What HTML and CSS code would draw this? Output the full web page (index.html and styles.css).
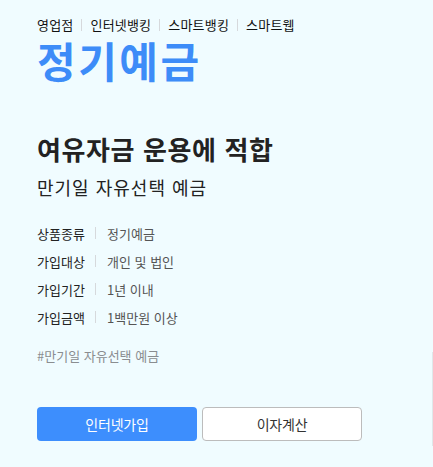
FILE: index.html
```html
<!DOCTYPE html>
<html lang="ko">
<head>
<meta charset="utf-8">
<title>정기예금</title>
<link rel="stylesheet" href="styles.css">
</head>
<body>
<div class="page">
  <nav class="channels">
    <span>영업점</span><i class="sep"></i><span>인터넷뱅킹</span><i class="sep"></i><span>스마트뱅킹</span><i class="sep"></i><span>스마트웹</span>
  </nav>
  <h1 class="title">정기예금</h1>
  <h2 class="headline">여유자금 운용에 적합</h2>
  <p class="subline">만기일 자유선택 예금</p>
  <dl class="info">
    <div class="row"><dt>상품종류</dt><dd>정기예금</dd></div>
    <div class="row"><dt>가입대상</dt><dd>개인 및 법인</dd></div>
    <div class="row"><dt>가입기간</dt><dd>1년 이내</dd></div>
    <div class="row"><dt>가입금액</dt><dd>1백만원 이상</dd></div>
  </dl>
  <p class="tag">#만기일 자유선택 예금</p>
  <div class="buttons">
    <a class="btn primary">인터넷가입</a>
    <a class="btn secondary">이자계산</a>
  </div>
</div>
<div class="edge"></div>
</body>
</html>
```

FILE: styles.css
```css
html, body {
  margin: 0;
  padding: 0;
  background: #f0fcff;
}
body {
  font-family: "Noto Sans CJK KR", "Noto Sans", sans-serif;
  color: #222;
  width: 433px;
  height: 467px;
  overflow: hidden;
  position: relative;
}
.page {
  padding: 15px 37px 0;
}
.channels {
  display: flex;
  align-items: center;
  height: 20px;
  line-height: 20px;
  font-size: 13px;
  color: #111;
  letter-spacing: 0.2px;
}
.channels .sep {
  display: block;
  width: 1px;
  height: 12px;
  background: #d6d9dc;
  margin: 0 8px;
}
.title {
  margin: 0;
  height: 50px;
  line-height: 50px;
  font-size: 42px;
  font-weight: 700;
  color: #3d8cf8;
  letter-spacing: 2.5px;
}
.headline {
  margin: 48px 0 0;
  height: 32px;
  line-height: 32px;
  font-size: 26px;
  font-weight: 700;
  color: #222;
  letter-spacing: 0.6px;
}
.subline {
  margin: 9px 0 0;
  height: 26px;
  line-height: 26px;
  font-size: 18px;
  color: #222;
  letter-spacing: 1px;
}
.info {
  margin: 19px 0 0;
}
.info .row {
  display: flex;
  align-items: center;
  height: 28px;
  font-size: 13px;
  letter-spacing: 0;
}
.info dt {
  width: 59px;
  color: #222;
  display: flex;
  align-items: center;
}
.info dt::after {
  content: "";
  display: block;
  width: 1px;
  height: 12px;
  background: #d6d9dc;
  margin-left: auto;
}
.info dd {
  margin: 0 0 0 11px;
  color: #555;
}
.tag {
  margin: 15px 0 0;
  height: 20px;
  line-height: 20px;
  font-size: 13px;
  color: #8a8d90;
  letter-spacing: 0;
}
.buttons {
  display: flex;
  gap: 5px;
  margin-top: 41px;
}
.btn {
  display: flex;
  align-items: center;
  justify-content: center;
  box-sizing: border-box;
  width: 160px;
  height: 34px;
  border-radius: 4px;
  font-size: 14px;
  letter-spacing: -0.2px;
}
.btn.primary {
  background: #3d8efd;
  color: #fff;
}
.btn.secondary {
  background: #fff;
  border: 1px solid #bcbcbc;
  color: #333;
}
.edge {
  position: absolute;
  left: 432px;
  top: 352px;
  width: 1px;
  height: 94px;
  background: #dfe8ea;
}
```
